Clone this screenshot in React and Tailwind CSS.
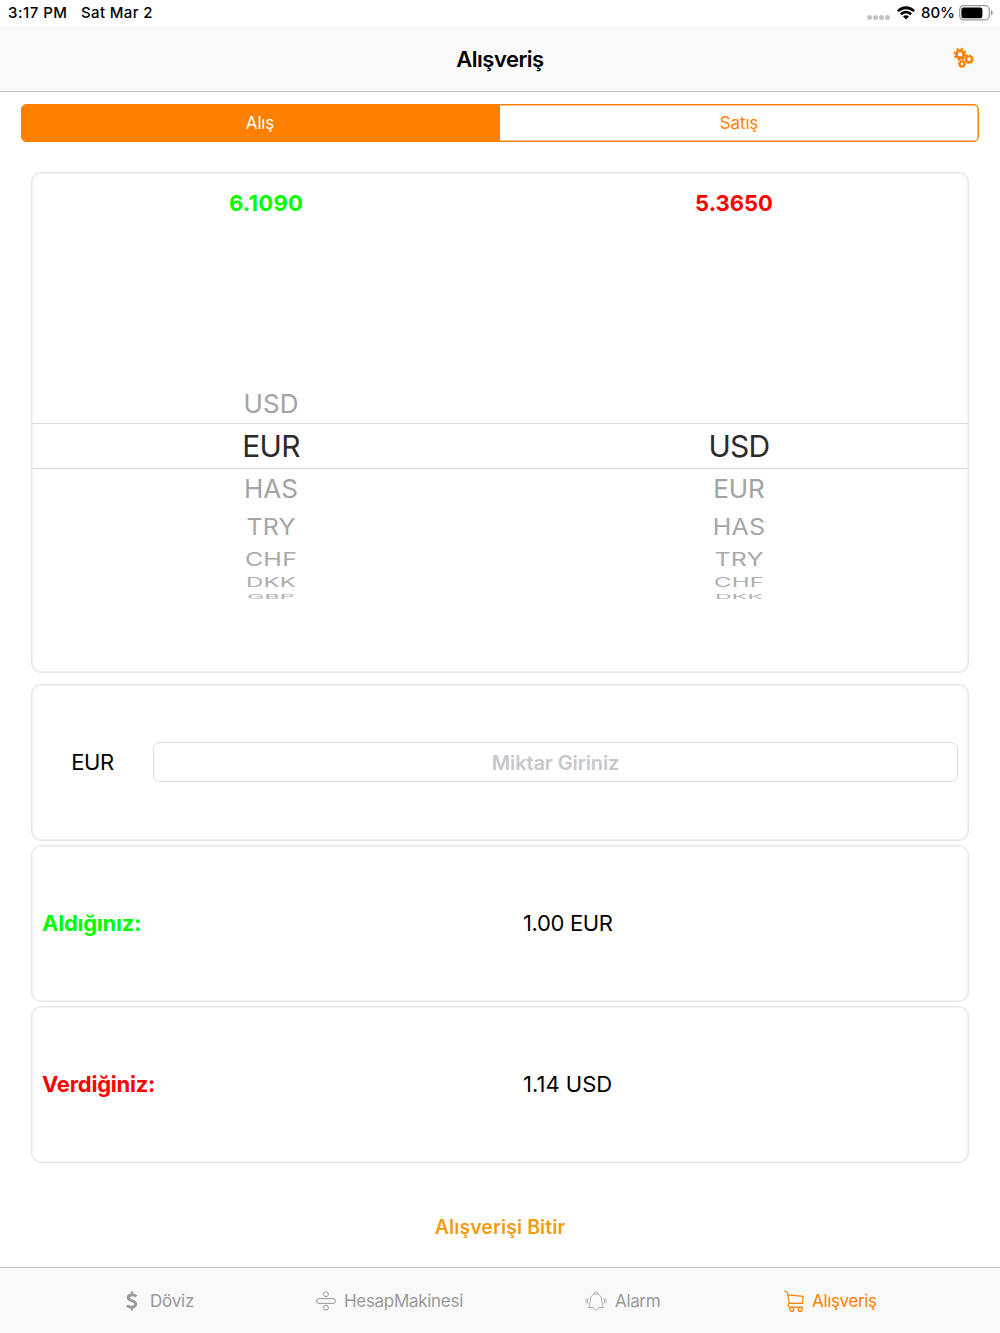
import React from "react";

const ROWS = [
  { h: "h-[39px]", t: "text-[26px] text-[#a3a3a3] tracking-[0.1px]" },
  { h: "h-[46px] border-y border-[#d9dbdc]", t: "text-[30px] text-[#2b2b2b] tracking-[-0.7px]" },
  { h: "h-[39px]", t: "text-[26px] text-[#a3a3a3] -translate-y-[0.5px]" },
  { h: "h-[39px]", t: "text-[25px] text-[#a6a6a6] scale-y-[0.91] tracking-[0.2px]" },
  { h: "h-[26px]", t: "text-[25px] text-[#a9a9a9] scale-y-[0.73] tracking-[0.2px] -translate-y-[1px]" },
  { h: "h-[21px]", t: "text-[24px] text-[#adadad] scale-y-[0.52] tracking-[0.2px] -translate-y-[1px]" },
  { h: "h-[8px]", t: "text-[23px] text-[#adadad] scale-y-[0.26] tracking-[0.2px] -translate-y-[1px]" },
];

function Wheel({ items }) {
  return (
    <div className="flex flex-1 flex-col">
      {ROWS.map((r, i) => (
        <div key={i} className={`flex items-center justify-center pl-[10px] ${r.h}`}>
          <span className={`block leading-none ${r.t}`}>{items[i]}</span>
        </div>
      ))}
    </div>
  );
}

function StatusBar() {
  return (
    <div className="flex h-[26px] items-center justify-between bg-white pl-[8px] pr-[6px] text-[15px] font-medium">
      <div className="flex gap-[13.5px]">
        <span className="tracking-[0.5px]">3:17 PM</span>
        <span className="tracking-[0.35px]">Sat Mar 2</span>
      </div>
      <div className="flex items-center">
        <div className="mr-[7px] mt-[9px] flex gap-[1.5px]">
          {[0, 1, 2, 3].map((i) => (
            <i key={i} className="block h-[4.5px] w-[4.5px] rounded-full bg-[#c4c4c4]" />
          ))}
        </div>
        <svg width="18" height="14" viewBox="0 0 18 14" className="mr-[6px]">
          <path d="M0 4.3C5-1 13-1 18 4.3L16.2 6.1C12.2 2.2 5.8 2.2 1.8 6.1Z" />
          <path d="M3 7.4C6.3 4 11.7 4 15 7.4L13.2 9.2C10.8 6.8 7.2 6.8 4.8 9.2Z" />
          <path d="M6 10.4C7.7 8.8 10.3 8.8 12 10.4L9 13.5Z" />
        </svg>
        <span>80%</span>
        <svg width="35" height="16" viewBox="0 0 35 16" className="ml-[4px]">
          <rect x="0.7" y="0.7" width="29.6" height="14.2" rx="4" fill="none" stroke="#999" strokeWidth="1.2" />
          <rect x="2.4" y="2.4" width="21" height="10.8" rx="2.2" />
          <path d="M32 5.2C34.2 6 34.2 9.6 32 10.4Z" fill="#999" />
        </svg>
      </div>
    </div>
  );
}

function Gear({ cx, cy, r, w, n }) {
  const c = 2 * Math.PI * (r + w * 0.65);
  return (
    <g fill="none" stroke="#ff8000">
      <circle cx={cx} cy={cy} r={r} strokeWidth={w} />
      <circle cx={cx} cy={cy} r={r + w * 0.65} strokeWidth={w * 0.65} strokeDasharray={`${c / n / 2} ${c / n / 2}`} />
    </g>
  );
}

function Card({ className, children }) {
  return (
    <section
      className={`mx-[31px] flex shrink-0 rounded-[10px] border border-[#e3e5e6] shadow-[inset_0_0_0_0.5px_#e3e5e6] ${className}`}
    >
      {children}
    </section>
  );
}

function Result({ label, color, value, spacing }) {
  return (
    <Card className="mb-[4px] h-[157px] items-center pl-[10px] text-[22px]">
      <span className={`w-[481px] font-bold tracking-[-0.25px] ${color}`}>{label}</span>
      <span className={spacing}>{value}</span>
    </Card>
  );
}

function Tab({ className, label, spacing, children }) {
  return (
    <div className={`flex w-1/4 items-center ${className}`}>
      {children}
      <span className={`mt-[2px] text-[17px] ${spacing}`}>{label}</span>
    </div>
  );
}

export default function App() {
  return (
    <div className="flex h-[1333px] w-[1000px] flex-col overflow-hidden bg-white font-['Inter',sans-serif] text-black">
      <StatusBar />
      <header className="flex h-[66px] shrink-0 items-center border-b border-[#bfc1c2] bg-[#f9f9f9] pr-[26px]">
        <div className="w-[48px]" />
        <h1 className="mt-[1px] flex-1 text-center text-[22px] font-semibold tracking-[-0.5px]">Alışveriş</h1>
        <svg width="22" height="22" viewBox="0 0 22 22" className="relative -top-[1px] left-[1px]">
          <Gear cx={7.1} cy={7.3} r={3.7} w={2.9} n={8} />
          <Gear cx={16} cy={12.2} r={2.9} w={2.1} n={8} />
          <Gear cx={9} cy={17} r={2.3} w={1.9} n={8} />
        </svg>
      </header>
      <div className="mx-[21px] mt-[12px] grid h-[38px] shrink-0 grid-cols-2 overflow-hidden rounded-[5px] border border-[#ff8000] text-center text-[17px] leading-[37px] tracking-[-0.15px] shadow-[inset_0_0_0_0.5px_#ff8000]">
        <div className="bg-[#ff8000] pr-[2px] text-white">Alış</div>
        <div className="text-[#ff8000]">Satış</div>
      </div>
      <Card className="mt-[30px] h-[501px] flex-col">
        <div className="flex h-[60px] items-center text-center text-[22px] font-bold">
          <span className="flex-1 tracking-[0.3px] text-[#00ff00]">6.1090</span>
          <span className="flex-1 text-[#ff0000]">5.3650</span>
        </div>
        <div className="mt-[151px] grid grid-cols-2">
          <Wheel items={["USD", "EUR", "HAS", "TRY", "CHF", "DKK", "GBP"]} />
          <Wheel items={["", "USD", "EUR", "HAS", "TRY", "CHF", "DKK"]} />
        </div>
      </Card>
      <Card className="mb-[4px] mt-[11px] h-[157px] items-center pr-[10px]">
        <span className="w-[121px] text-center text-[22px] tracking-[-0.4px]">EUR</span>
        <input
          className="mb-px h-[40px] flex-1 rounded-[7px] border border-[#dcdcde] bg-white pt-px text-center text-[20px] font-semibold tracking-[-0.1px] outline-none placeholder:text-[#c7c7cc]"
          placeholder="Miktar Giriniz"
        />
      </Card>
      <Result label="Aldığınız:" color="text-[#00ff00]" value="1.00 EUR" spacing="tracking-[-0.35px]" />
      <Result label="Verdiğiniz:" color="text-[#ff0000]" value="1.14 USD" spacing="tracking-[0.02px]" />
      <div className="flex flex-1 items-center justify-center pt-[21px] text-[19.5px] font-semibold tracking-[0.08px] text-[#f39c12]">
        Alışverişi Bitir
      </div>
      <nav className="flex h-[66px] shrink-0 border-t border-[#bfc1c2] bg-[#f9f9f9] text-[#999]">
        <Tab label="Döviz" className="pl-[126px]" spacing="tracking-[-0.2px]">
          <svg width="12" height="20" viewBox="0 0 12 20" className="mr-[12px]" fill="none" stroke="currentColor">
            <path d="M10.4 5.3C8.3 3.6 2.2 3 2.2 6.8C2.2 10.3 9.7 9 9.7 13.1C9.7 17 3.4 16.7 1 14.5" strokeWidth="2.8" />
            <path d="M6 .5V4M6 16V19.5" strokeWidth="2.4" />
          </svg>
        </Tab>
        <Tab label="HesapMakinesi" className="pl-[66px]" spacing="tracking-[-0.3px]">
          <svg width="20" height="20" viewBox="0 0 20 20" className="mr-[8px] shrink-0" fill="none" stroke="currentColor" strokeWidth="1">
            <circle cx="10" cy="3.2" r="2.4" />
            <rect x=".6" y="7.6" width="18.8" height="4.8" rx="2.4" />
            <circle cx="10" cy="16.7" r="2.4" />
          </svg>
        </Tab>
        <Tab label="Alarm" className="pl-[85px]" spacing="tracking-[-0.35px]">
          <svg width="22" height="20" viewBox="0 0 22 20" className="mr-[8px]" fill="none" stroke="currentColor" strokeWidth=".8">
            <path d="M3.2 16.6C5.4 14.8 5 12.5 5.2 9.5C5.4 5.5 7.5 3 11 3S16.6 5.5 16.8 9.5C17 12.5 16.6 14.8 18.8 16.6H13.5C13 19.8 9 19.8 8.5 16.6ZM9 3C9 0 13 0 13 3" />
            <path d="M3.1 7.2Q1.8 10 3.1 12.8M1.4 7.7Q.2 10 1.4 12.3M18.9 7.2Q20.2 10 18.9 12.8M20.6 7.7Q21.8 10 20.6 12.3" />
          </svg>
        </Tab>
        <Tab label="Alışveriş" className="pl-[34px] text-[#ff8000]" spacing="tracking-[-0.35px]">
          <svg width="20" height="22" viewBox="0 0 20 22" className="mr-[8px]" fill="none" stroke="currentColor" strokeWidth="1.2" strokeLinejoin="round" strokeLinecap="round">
            <path d="M.7 1.2L3.2 2L5.3 13.3M3.8 4.8L19.2 6.4L18.4 13.3H5.3C3.7 14 3.9 16.8 5.6 17.2H18.6" />
            <circle cx="7.7" cy="19.4" r="2" />
            <circle cx="16.2" cy="19.4" r="2" />
          </svg>
        </Tab>
      </nav>
    </div>
  );
}
